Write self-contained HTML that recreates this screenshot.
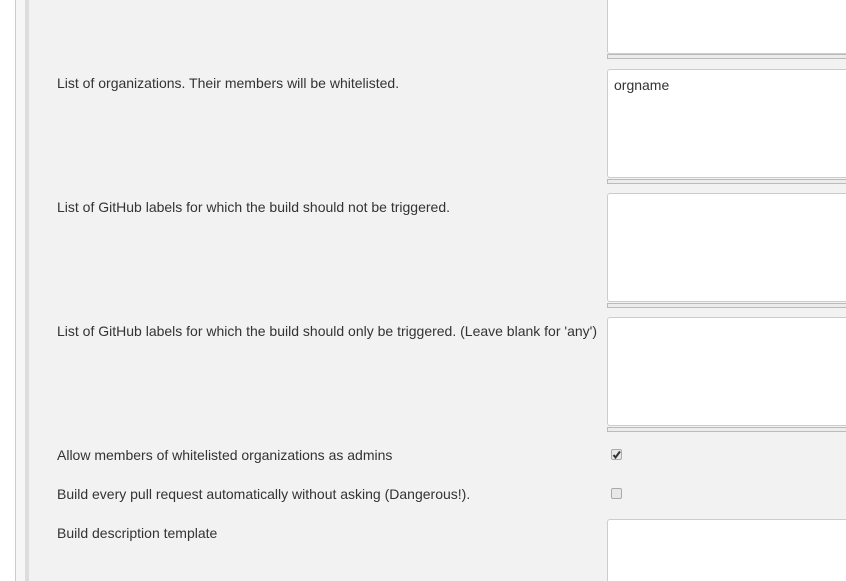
<!DOCTYPE html>
<html style="overflow:hidden;height:581px"><head><style>
body{margin:0;width:846px;height:581px;overflow:hidden;background:#fff;font-family:"Liberation Sans",sans-serif;font-size:14px;color:#333;position:relative}
.l1{position:absolute;left:15px;top:0;width:1px;height:581px;background:#ccc}
.l2{position:absolute;left:16px;top:0;width:9px;height:581px;background:#f6f6f6}
.l3{position:absolute;left:25px;top:0;width:4px;height:581px;background:#ddd}
.bg{position:absolute;left:29px;top:0;right:0;height:581px;background:#f2f2f2}
.t{position:absolute;left:57px;font-size:14px;color:#333}
.ta{position:absolute;left:607px;width:260px;background:#fff;border:1px solid #ccc;border-radius:3px;box-sizing:border-box}
.bar{position:absolute;left:607px;width:260px;height:5px;border:1px solid #bbb;border-right:none;box-sizing:border-box;background:#ececec}
.cb{position:absolute;left:611px;width:11px;height:11px;border:1px solid #aaa;border-radius:2px;background:#e8e8e8;box-sizing:border-box}
</style></head><body>
<div class="l1"></div><div class="l2"></div><div class="l3"></div><div class="bg"></div>
<div class="ta" style="top:-10px;height:64px"></div><div class="bar" style="top:54px"></div>
<div class="t" style="top:75px">List of organizations. Their members will be whitelisted.</div>
<div class="ta" style="top:69px;height:109px;padding:7px 6px">orgname</div><div class="bar" style="top:179px"></div>
<div class="t" style="top:199px">List of GitHub labels for which the build should not be triggered.</div>
<div class="ta" style="top:193px;height:109px"></div><div class="bar" style="top:303px"></div>
<div class="t" style="top:323px">List of GitHub labels for which the build should only be triggered. (Leave blank for 'any')</div>
<div class="ta" style="top:317px;height:109px"></div><div class="bar" style="top:427px"></div>
<div class="t" style="top:447px">Allow members of whitelisted organizations as admins</div>
<div class="cb" style="top:449px"><svg width="9" height="9" style="position:absolute;left:0;top:0"><path d="M1.5 5 L3.5 7.5 L8 1.5" stroke="#333" stroke-width="2" fill="none"/></svg></div>
<div class="t" style="top:486px">Build every pull request automatically without asking (Dangerous!).</div>
<div class="cb" style="top:488px"></div>
<div class="t" style="top:525px">Build description template</div>
<div class="ta" style="top:519px;height:70px"></div>
</body></html>
